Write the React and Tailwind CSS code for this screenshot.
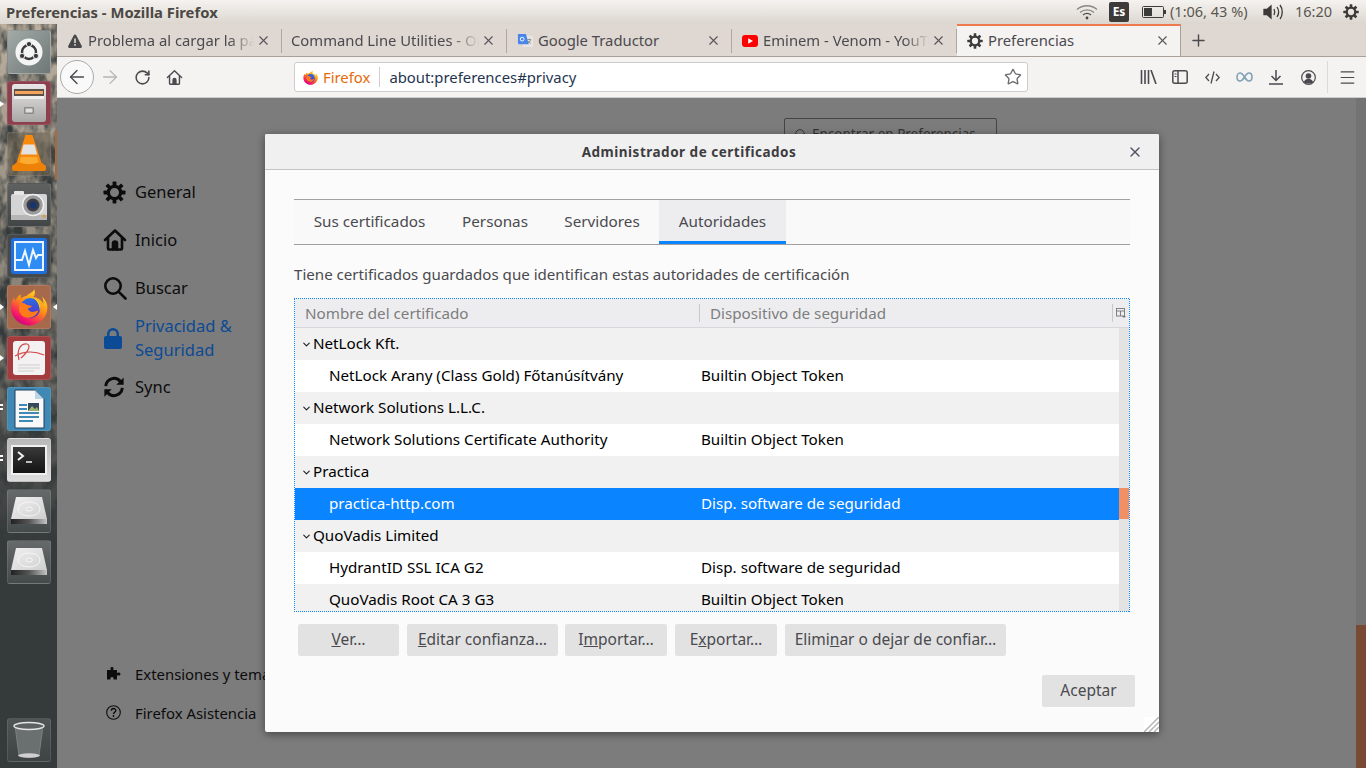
import React from "react";
import { ArrowLeft, ArrowRight, RotateCw, Star, X, Plus, Menu, ChevronDown, Search } from "lucide-react";

const FONT = "font-['Noto_Sans','DejaVu_Sans',sans-serif]";

function Gear({ size = 16, color = "#3c3c3c", hole = "transparent" }) {
  const teeth = [0, 45, 90, 135, 180, 225, 270, 315];
  return (
    <svg width={size} height={size} viewBox="0 0 24 24" fill="none">
      {teeth.map((a) => (
        <rect key={a} x="10" y="0.5" width="4" height="6" rx="0.8" fill={color} transform={`rotate(${a} 12 12)`} />
      ))}
      <circle cx="12" cy="12" r="6.4" fill={hole} stroke={color} strokeWidth="3.4" />
    </svg>
  );
}

function HomeIcon({ size = 16, color = "#3c3c3c", sw = 2 }) {
  return (
    <svg width={size} height={size} viewBox="0 0 24 24" fill="none" stroke={color} strokeWidth={sw} strokeLinejoin="round" strokeLinecap="round">
      <path d="M2 12 12 2.5 22 12" />
      <path d="M5 10v10.5a1 1 0 0 0 1 1h12a1 1 0 0 0 1-1V10" />
      <path d="M10 21.5v-6a2 2 0 0 1 4 0v6" fill={color} />
    </svg>
  );
}

function FirefoxLogo({ size = 16, id = "ff" }) {
  return (
    <svg width={size} height={size} viewBox="0 0 32 32">
      <defs>
        <linearGradient id={`${id}a`} x1="0.8" y1="0" x2="0.2" y2="1">
          <stop offset="0" stopColor="#ffe226" />
          <stop offset="0.45" stopColor="#ff8a16" />
          <stop offset="0.8" stopColor="#f5156c" />
          <stop offset="1" stopColor="#b5007f" />
        </linearGradient>
        <linearGradient id={`${id}b`} x1="0.5" y1="0" x2="0.5" y2="1">
          <stop offset="0" stopColor="#2a6fe0" />
          <stop offset="1" stopColor="#592acb" />
        </linearGradient>
      </defs>
      <path d="M20.5 1c1 3.2.3 5.2-1 6.6C24 8 27 11 28 13.500c.2-2-.2-4.500-1.200-6.500C30 10 31.500 13 31.500 16.500 31.500 25 24.500 31.500 16 31.500S.8 25 .8 16.500c0-3.500 1-6 2.700-8.700.2 1.200.6 2.200 1.300 3 .7-2.500 2.300-4.500 4.200-5.500-.2 1.300 0 2.400.6 3.300C11.500 6.500 14 7 14.500 6 16 4.500 19.500 3.500 20.500 1z" fill={`url(#${id}a)`} />
      <circle cx="17" cy="17" r="8.500" fill={`url(#${id}b)`} />
      <path d="M8 14c2-2 4-1.500 5-.5 1 1 4 1.500 5.500 1.500-.5 1.500-3 2-3.500 2.500.5 2 3 3 5 2.500 2-.5 3.500-1.500 4-1-1.500 4-5 6.500-9.500 6-5-.5-8-5-6.500-11z" fill="#ff7a18" />
      <path d="M20 8.500c3 1 5.500 4 5.500 8 0 1-.2 2-.5 2.500.2-4-2-8-5-10.500z" fill="#ffd21f" />
    </svg>
  );
}

/* launcher tiles */
function Tile({ bg, children }) {
  return (
    <div className={`relative w-[44px] h-[44px] rounded-[3px] flex items-center justify-center overflow-hidden border border-white/10 ${bg}`}>
      {children}
    </div>
  );
}

function UbuntuTile() {
  return (
    <Tile bg="bg-gradient-to-br from-[#a3aba9] to-[#6f7776]">
      <svg width="28" height="28" viewBox="0 0 30 30">
        <circle cx="15" cy="15" r="14.500" fill="#f4f4f4" />
        <circle cx="15" cy="15" r="7.500" fill="none" stroke="#3a3a3a" strokeWidth="2.600" />
        <circle cx="15" cy="6.500" r="2.800" fill="#3a3a3a" stroke="#f4f4f4" strokeWidth="1" />
        <circle cx="7.600" cy="19.200" r="2.800" fill="#3a3a3a" stroke="#f4f4f4" strokeWidth="1" />
        <circle cx="22.400" cy="19.200" r="2.800" fill="#3a3a3a" stroke="#f4f4f4" strokeWidth="1" />
      </svg>
    </Tile>
  );
}

function FilesTile() {
  return (
    <Tile bg="bg-[#8c3f4c]">
      <svg width="36" height="40" viewBox="0 0 36 40">
        <defs>
          <linearGradient id="cab" x1="0" y1="0" x2="0" y2="1">
            <stop offset="0" stopColor="#e8e8e8" />
            <stop offset="1" stopColor="#a9a7a5" />
          </linearGradient>
        </defs>
        <rect x="1" y="1" width="34" height="38" rx="3" fill="url(#cab)" />
        <rect x="3" y="6" width="30" height="9" fill="#5c5149" />
        <rect x="4" y="8" width="28" height="3" fill="#f2a45a" />
        <rect x="3" y="13" width="30" height="3" fill="#efefef" />
        <rect x="13" y="24" width="10" height="7" rx="1" fill="#8a8a8a" />
        <rect x="14.500" y="25.500" width="7" height="4" fill="#dedede" />
      </svg>
    </Tile>
  );
}

function VlcTile() {
  return (
    <Tile bg="bg-[#6b6150]/60">
      <svg width="36" height="40" viewBox="0 0 36 40">
        <path d="M14.500 1h7l10 31h-27z" fill="#f7890c" />
        <path d="M12.500 10.500h11l2.600 10H9.900z" fill="#e2e2e2" />
        <path d="M1 32l4-3h26l4 3v3a2 2 0 0 1-2 2H3a2 2 0 0 1-2-2z" fill="#ee8207" />
        <path d="M8.500 28c5 3 14 3 19 0l-1.500-5H10z" fill="#fbab2f" />
      </svg>
    </Tile>
  );
}

function CameraTile() {
  return (
    <Tile bg="bg-gradient-to-b from-[#5f6161] to-[#424646]">
      <svg width="38" height="32" viewBox="0 0 38 32">
        <rect x="1" y="5" width="36" height="26" rx="2" fill="#d4d4d4" />
        <rect x="1" y="26" width="36" height="5" fill="#b6b6b6" />
        <rect x="4" y="2" width="10" height="4" rx="1" fill="#e6e6e6" />
        <circle cx="23" cy="16" r="10.500" fill="#9a9a9a" stroke="#efefef" strokeWidth="1.500" />
        <circle cx="23" cy="16" r="6.500" fill="#3a3d43" />
        <circle cx="23" cy="16" r="3.500" fill="#18356f" />
        <circle cx="34" cy="27" r="1.500" fill="#e59a2e" />
      </svg>
    </Tile>
  );
}

function MonitorTile() {
  return (
    <Tile bg="bg-[#45494a]">
      <svg width="38" height="38" viewBox="0 0 38 38">
        <rect x="1" y="1" width="36" height="36" rx="3" fill="#1f6fe0" />
        <rect x="4" y="4" width="30" height="30" fill="#eaf4ff" />
        <rect x="6" y="6" width="26" height="26" fill="#2f8cf2" />
        <path d="M6 23h6l3-9 4 14 4-15 3 8 2-3h4" fill="none" stroke="#eef6ff" strokeWidth="2" />
      </svg>
    </Tile>
  );
}

function FirefoxTile() {
  return (
    <Tile bg="bg-[#a7694c]">
      <FirefoxLogo size={38} id="ffl" />
    </Tile>
  );
}

function PdfTile() {
  return (
    <Tile bg="bg-[#a23c3e]">
      <svg width="34" height="36" viewBox="0 0 34 36">
        <rect x="1" y="1" width="32" height="34" rx="3" fill="#f3f1f1" />
        <path d="M7 20C4 8 10 3 15 4c4 1 2 7-6 14M3 16c9-5 20-5 29-1" fill="none" stroke="#d24a4d" strokeWidth="1.200" />
        <path d="M6 25h22M6 28h22M6 31h16" stroke="#cfcfcf" strokeWidth="1" />
      </svg>
    </Tile>
  );
}

function WriterTile() {
  return (
    <Tile bg="bg-[#3f89b4]">
      <svg width="32" height="40" viewBox="0 0 32 40">
        <path d="M2 1h20l9 9v29H2z" fill="#f8f8f8" stroke="#1f3f5f" strokeWidth="1" />
        <path d="M22 1l9 9h-9z" fill="#b9d5e6" />
        <rect x="6" y="15" width="8" height="2" fill="#3f89b4" />
        <rect x="6" y="19" width="8" height="2" fill="#3f89b4" />
        <rect x="6" y="23" width="20" height="2" fill="#3f89b4" />
        <rect x="6" y="27" width="20" height="2" fill="#3f89b4" />
        <rect x="6" y="31" width="14" height="2" fill="#3f89b4" />
        <rect x="15" y="14" width="11" height="8" fill="#35495e" />
        <path d="M15 22l4-5 3 3 2-2 2 4z" fill="#9bb36a" />
      </svg>
    </Tile>
  );
}

function TerminalTile() {
  return (
    <Tile bg="bg-gradient-to-b from-[#b8b8b8] to-[#dcdcdc]">
      <div className="w-[36px] h-[30px] border-2 border-[#f0f0f0] bg-gradient-to-b from-[#3a3a3a] to-[#141414] flex items-start pl-[4px] pt-[4px]">
        <svg width="20" height="14" viewBox="0 0 20 14" fill="none" stroke="#f2f2f2">
          <path d="M1 1l5 4-5 4" strokeWidth="2" />
          <path d="M9 11h6" strokeWidth="1.500" />
        </svg>
      </div>
    </Tile>
  );
}

function DriveTile({ id = "drv" }) {
  return (
    <Tile bg="bg-gradient-to-b from-[#666a6a] to-[#454a4a]">
      <svg width="38" height="30" viewBox="0 0 38 30">
        <defs>
          <linearGradient id={`${id}t`} x1="0" y1="0" x2="1" y2="1">
            <stop offset="0" stopColor="#f0f0f0" />
            <stop offset="1" stopColor="#cfcfcf" />
          </linearGradient>
          <linearGradient id={id} x1="0" y1="0" x2="1" y2="0">
            <stop offset="0" stopColor="#222" />
            <stop offset="0.5" stopColor="#555" />
            <stop offset="1" stopColor="#c4c4c4" />
          </linearGradient>
        </defs>
        <path d="M6 1h26l5 22H1z" fill={`url(#${id}t)`} />
        <ellipse cx="19" cy="13" rx="11" ry="7" fill="none" stroke="#fafafa" strokeWidth="0.800" />
        <ellipse cx="19" cy="13" rx="3.500" ry="2" fill="none" stroke="#fafafa" strokeWidth="0.800" />
        <rect x="1" y="23" width="36" height="5" fill={`url(#${id})`} />
      </svg>
    </Tile>
  );
}

function TrashTile() {
  return (
    <Tile bg="bg-gradient-to-b from-[#4f5454] to-[#3e4343]">
      <svg width="32" height="38" viewBox="0 0 32 38">
        <path d="M2 5l4 30c3 2 17 2 20 0l4-30z" fill="#6a7070" stroke="#8e9494" strokeWidth="0.600" />
        <ellipse cx="16" cy="5" rx="15" ry="3.500" fill="#5c6161" stroke="#e6e6e6" strokeWidth="1.400" />
        <ellipse cx="16" cy="34.500" rx="11" ry="2.200" fill="#cfcfcf" />
      </svg>
    </Tile>
  );
}

function Launcher() {
  const tiles = [UbuntuTile, FilesTile, VlcTile, CameraTile, MonitorTile, FirefoxTile, PdfTile, WriterTile, TerminalTile];
  return (
    <div className="relative w-[57px] shrink-0 h-full flex flex-col items-center pt-[6px] pb-[6px] gap-[7px] bg-[#353a3b]">
      {/* wallpaper showing through the launcher */}
      <svg className="absolute left-0 top-0" width="57" height="520" viewBox="0 0 57 520">
        <defs>
          <filter id="bark" x="0" y="0" width="100%" height="100%">
            <feTurbulence type="fractalNoise" baseFrequency="0.09 0.05" numOctaves="3" seed="7" />
            <feColorMatrix values="0 0 0 0 0.5  0 0 0 0 0.43  0 0 0 0 0.34  2.6 0 0 0 -0.7" />
          </filter>
          <linearGradient id="fadeW" x1="0" y1="0" x2="0" y2="1">
            <stop offset="0" stopColor="#fff" />
            <stop offset="0.55" stopColor="#fff" stopOpacity="0.6" />
            <stop offset="1" stopColor="#fff" stopOpacity="0" />
          </linearGradient>
          <mask id="fadeM"><rect width="57" height="520" fill="url(#fadeW)" /></mask>
        </defs>
        <g mask="url(#fadeM)">
          <rect width="57" height="520" filter="url(#bark)" />
        </g>
        <rect x="55" y="106" width="2" height="50" fill="#a8693c" />
      </svg>
      {tiles.map((T, i) => (
        <T key={i} />
      ))}
      <DriveTile id="drv1" />
      <DriveTile id="drv2" />
      <div className="mt-auto">
        <TrashTile />
      </div>
      {/* running app pips */}
      <div className="absolute left-0 top-[77px] w-0 h-0 border-y-[3px] border-y-transparent border-l-[4px] border-l-white" />
      <div className="absolute left-0 top-[280px] w-0 h-0 border-y-[3px] border-y-transparent border-l-[4px] border-l-white" />
      <div className="absolute right-0 top-[280px] w-0 h-0 border-y-[3px] border-y-transparent border-r-[4px] border-r-white" />
      <div className="absolute left-0 top-[331px] w-0 h-0 border-y-[3px] border-y-transparent border-l-[4px] border-l-white" />
      <div className="absolute left-0 top-[380px] w-[3px] h-[2px] bg-white" />
      <div className="absolute left-0 top-[384px] w-[3px] h-[2px] bg-white" />
      <div className="absolute left-0 top-[431px] w-[3px] h-[2px] bg-white" />
      <div className="absolute left-0 top-[435px] w-[3px] h-[2px] bg-white" />
    </div>
  );
}

function TopBar() {
  return (
    <div className="h-[24px] shrink-0 flex items-center pl-[6px] pr-[7px] bg-gradient-to-b from-[#f5f3f0] to-[#dcd6cf] text-[#4c4843]">
      <span className="text-[14.800px] font-bold">Preferencias - Mozilla Firefox</span>
      <div className="ml-auto flex items-center text-[#5a5650] text-[14.500px]">
        <svg width="22" height="16" viewBox="0 0 22 16" fill="none" stroke="#8a8782" strokeWidth="1.300">
          <path d="M1 5.500C6.500.5 15.500.5 21 5.500" />
          <path d="M4 8.500c4-3.500 10-3.500 14 0" />
          <path d="M7 11c2.500-2 5.500-2 8 0" stroke="#4c4843" />
          <circle cx="11" cy="14" r="1.400" fill="#4c4843" stroke="none" />
        </svg>
        <div className="ml-[11px] w-[20px] h-[20px] rounded-[2px] bg-[#3c3b39] text-white text-[12px] font-bold flex items-center justify-center">Es</div>
        <svg className="ml-[13px]" width="24" height="12" viewBox="0 0 24 12" fill="none">
          <rect x="0.500" y="0.500" width="21" height="11" rx="1" stroke="#3c3b39" />
          <rect x="2" y="2" width="8" height="8" fill="#3c3b39" />
          <rect x="22" y="4" width="2" height="4" fill="#3c3b39" />
        </svg>
        <span className="ml-[4px] w-[78px] whitespace-nowrap">(1:06, 43 %)</span>
        <svg className="ml-[15px]" width="21" height="16" viewBox="0 0 21 16" fill="none" stroke="#3c3b39" strokeWidth="1.300">
          <path d="M1 5.500h3L8 2v12l-4-3.500H1z" fill="#3c3b39" />
          <path d="M11 5c1 2 1 4 0 6M14 3c2 3 2 7 0 10M17 1c3 4 3 10 0 14" />
        </svg>
        <span className="ml-[11px] w-[38px]">16:20</span>
        <span className="ml-[10px]"><Gear size={16} color="#3c3b39" /></span>
      </div>
    </div>
  );
}

function Warn() {
  return (
    <svg width="16" height="16" viewBox="0 0 16 16">
      <path d="M8 1.500c.5 0 1 .3 1.200.8l5.600 10.800c.4.800-.1 1.900-1.200 1.900H2.400c-1.100 0-1.600-1.100-1.200-1.900L6.800 2.300c.2-.5.700-.8 1.200-.8z" fill="#48484a" />
      <rect x="7.200" y="5.500" width="1.600" height="4.500" fill="#dfd7d1" />
      <rect x="7.200" y="11" width="1.600" height="1.700" fill="#dfd7d1" />
    </svg>
  );
}

function GTranslate() {
  return (
    <svg width="16" height="16" viewBox="0 0 17 17">
      <rect x="6" y="3" width="11" height="12" rx="1" fill="#e8e6e4" />
      <path d="M1 1h8.500l3 11H2.500A1.500 1.500 0 0 1 1 10.500z" fill="#4a86e8" />
      <circle cx="5.500" cy="6.500" r="2" fill="none" stroke="#fff" strokeWidth="1" />
      <path d="M11 7h4M13 6v1M14.500 7c-.5 2-1.800 3.500-3.500 4M11.800 8.500c.5 1 1.500 2 3 2.500" stroke="#6f6f6f" strokeWidth="0.700" fill="none" />
    </svg>
  );
}

function YouTube() {
  return (
    <svg width="16" height="12" viewBox="0 0 16 12">
      <rect width="16" height="12" rx="3" fill="#ff0000" />
      <path d="M6.200 3.300 11 6l-4.800 2.700z" fill="#fff" />
    </svg>
  );
}

function Tab({ icon, label, active, sep = true, fade = true }) {
  return (
    <div className={`h-full flex items-center shrink-0 relative ${active ? "w-[224px] bg-[#f5f3f2] border-t-2 border-t-[#f07a50] border-r border-r-[#a89f99] pl-[9px] pr-[9px] pb-[1px]" : "w-[225px] pl-[9px] pr-[10px] pt-[1px]"}`}>
      {icon && <span className="w-[16px] h-[16px] ml-[1px] mr-[5px] flex items-center justify-center shrink-0">{icon}</span>}
      <span className={`flex-1 min-w-0 overflow-hidden whitespace-nowrap text-[14.800px] text-[#4a4a4f] ${fade ? "[mask-image:linear-gradient(to_right,black_85%,transparent)]" : ""}`}>{label}</span>
      <X size={15} strokeWidth={1.800} color="#55555a" className="ml-[2px] mr-[1px] shrink-0" />
      {sep && <span className="w-px h-[24px] bg-[#aea69f] absolute right-0" />}
    </div>
  );
}

function TabBar() {
  return (
    <div className="h-[33px] shrink-0 flex bg-[#dfd7d1] border-b border-b-[#a89f99]">
      <Tab icon={<Warn />} label="Problema al cargar la página" />
      <Tab label="Command Line Utilities - OpenSSL" />
      <Tab icon={<GTranslate />} label="Google Traductor" fade={false} />
      <Tab icon={<YouTube />} label="Eminem - Venom - YouTube" />
      <Tab icon={<Gear size={16} color="#3c3c3c" />} label="Preferencias" active sep={false} fade={false} />
      <div className="ml-[8px] flex items-center">
        <Plus size={19} strokeWidth={1.800} color="#4a4a4f" />
      </div>
    </div>
  );
}

function ToolIcon({ children, w = 32 }) {
  return <div className="h-full flex items-center justify-center shrink-0" style={{ width: w }}>{children}</div>;
}

function Toolbar() {
  return (
    <div className="h-[41px] shrink-0 flex items-center bg-[#f5f3f2] border-b border-b-[#cfcdcb] pl-[3px]">
      <div className="w-[34px] h-[34px] rounded-full border border-[#aaa] bg-[#f9f9f9] flex items-center justify-center shrink-0">
        <ArrowLeft size={22} strokeWidth={1.500} color="#4a4a4f" />
      </div>
      <ToolIcon w={32}><ArrowRight size={22} strokeWidth={1.400} color="#b5b5b5" /></ToolIcon>
      <ToolIcon w={32}><RotateCw size={17} strokeWidth={2.200} color="#4a4a4f" /></ToolIcon>
      <ToolIcon w={32}><HomeIcon size={17} color="#4a4a4f" /></ToolIcon>
      <div className="ml-[104px] w-[734px] h-[30px] bg-white border border-[#cccccc] rounded-[3px] flex items-center pl-[8px] pr-[5px] text-[14.850px]">
        <FirefoxLogo size={15} id="ffu" />
        <span className="ml-[5px] text-[#e66a0a]">Firefox</span>
        <span className="ml-[9px] w-px h-[20px] bg-[#cfcfcf]" />
        <span className="ml-[9px] text-[#1f3550]">about:preferences#privacy</span>
        <Star size={18} strokeWidth={1.800} color="#6a6a6f" className="ml-auto" />
      </div>
      <div className="ml-[104px] flex h-full items-center">
        <ToolIcon>
          <svg width="17" height="14" viewBox="0 0 17 14" stroke="#4a4a4f" strokeWidth="1.600" fill="none">
            <path d="M1.500 0v14M5 0v14M8.500 0v14M11 0l5 14" />
          </svg>
        </ToolIcon>
        <ToolIcon>
          <svg width="16" height="14" viewBox="0 0 16 14" fill="none" stroke="#4a4a4f" strokeWidth="1.500">
            <rect x="0.800" y="0.800" width="14.400" height="12.400" rx="2" />
            <path d="M6 1v12" />
            <path d="M2.500 4h2M2.500 6.500h2" strokeWidth="1" />
          </svg>
        </ToolIcon>
        <ToolIcon>
          <svg width="15" height="13" viewBox="0 0 15 13" fill="none" stroke="#4a4a4f" strokeWidth="1.300">
            <path d="M4 3 .8 6.500 4 10M11 3l3.200 3.500L11 10M9 .5 6 12.500" />
          </svg>
        </ToolIcon>
        <ToolIcon>
          <svg width="17" height="10" viewBox="0 0 17 10" fill="none" stroke="#7fa0b2" strokeWidth="1.600">
            <path d="M8.500 5C7 2.500 5.800 1 4 1 2.200 1 1 2.800 1 5s1.200 4 3 4c1.800 0 3-1.500 4.500-4zm0 0C10 2.500 11.200 1 13 1c1.800 0 3 1.800 3 4s-1.200 4-3 4c-1.800 0-3-1.500-4.500-4z" />
          </svg>
        </ToolIcon>
        <ToolIcon>
          <svg width="14" height="15" viewBox="0 0 14 15" fill="none" stroke="#4a4a4f" strokeWidth="1.500">
            <path d="M7 0v10M2.500 6 7 10.500 11.500 6M0 14h14" />
          </svg>
        </ToolIcon>
        <ToolIcon>
          <svg width="15" height="15" viewBox="0 0 15 15">
            <circle cx="7.500" cy="7.500" r="6.800" fill="none" stroke="#4a4a4f" strokeWidth="1.200" />
            <circle cx="7.500" cy="6" r="2.800" fill="#4a4a4f" />
            <path d="M2.800 12c1-2.500 3-3 4.700-3s3.700.5 4.700 3c-2.500 2-7 2-9.400 0z" fill="#4a4a4f" />
          </svg>
        </ToolIcon>
        <span className="ml-[3px] w-px h-[32px] bg-[#dcdad8]" />
        <div className="ml-[10px]"><Menu size={19} strokeWidth={1.500} color="#4a4a4f" /></div>
      </div>
    </div>
  );
}

function SideItem({ icon, children, blue, small }) {
  return (
    <div className={`flex items-center h-full leading-[24px] ${small ? "text-[14.900px]" : "text-[16.500px]"} ${blue ? "text-[#0b4a94]" : "text-[#0c0c0d]"}`}>
      <span className="w-[32px] flex items-center justify-start shrink-0">{icon}</span>
      <span className="whitespace-nowrap">{children}</span>
    </div>
  );
}

function Sidebar() {
  return (
    <div className="w-[250px] shrink-0 flex flex-col pl-[46px] pt-[70px] pb-[36px]">
      <div className="h-[48px]"><SideItem icon={<Gear size={23} color="#0c0c0d" />}>General</SideItem></div>
      <div className="h-[48px]"><SideItem icon={<HomeIcon size={24} color="#0c0c0d" sw={2.600} />}>Inicio</SideItem></div>
      <div className="h-[48px]">
        <SideItem icon={
          <svg width="24" height="24" viewBox="0 0 24 24" fill="none" stroke="#0c0c0d" strokeWidth="2.600" strokeLinecap="round">
            <circle cx="10" cy="10" r="7.700" />
            <path d="M15.800 15.800 22.500 22.500" />
          </svg>
        }>Buscar</SideItem>
      </div>
      <div className="h-[52px]">
        <SideItem blue icon={
          <svg width="20" height="23" viewBox="0 0 20 23" fill="#0b4a94">
            <path d="M4 10V7a6 6 0 0 1 12 0v3h-2.500V7a3.500 3.500 0 0 0-7 0v3z" />
            <rect x="1" y="9" width="18" height="13" rx="2" />
          </svg>
        }>
          Privacidad &<br />Seguridad
        </SideItem>
      </div>
      <div className="h-[46px]">
        <SideItem icon={
          <svg width="22" height="22" viewBox="0 0 24 24" fill="none" stroke="#0c0c0d" strokeWidth="3.200">
            <path d="M3 11a9 9 0 0 1 16-5l2 2" />
            <path d="M21 13a9 9 0 0 1-16 5l-2-2" />
            <path d="M22.500 1.500v8h-8z" fill="#0c0c0d" stroke="none" />
            <path d="M1.500 22.500v-8h8z" fill="#0c0c0d" stroke="none" />
          </svg>
        }>Sync</SideItem>
      </div>
      <div className="mt-auto">
        <div className="h-[39px]">
          <SideItem small icon={
            <svg className="ml-[3px]" width="15" height="15" viewBox="0 0 15 15" fill="#0c0c0d">
              <path d="M1 4h4c-1-1-.8-3 1-3s2 2 1 3h4v3c1-1 3.500-.8 3.500 1s-2.500 2-3.500 1v4.500H7.500c.5-1.500-.5-2.500-1.500-2.500S4 12 4.500 13.500H1z" />
            </svg>
          }>Extensiones y temas</SideItem>
        </div>
        <div className="h-[39px]">
          <SideItem small icon={
            <svg className="ml-[3px]" width="15" height="15" viewBox="0 0 15 15" fill="none" stroke="#0c0c0d" strokeWidth="1.100">
              <circle cx="7.500" cy="7.500" r="6.800" />
              <path d="M5.300 5.800c0-3 4.500-3 4.500-.3 0 1.800-2.300 1.600-2.300 3.500" strokeWidth="1.400" />
              <circle cx="7.500" cy="11" r="0.900" fill="#0c0c0d" stroke="none" />
            </svg>
          }>Firefox Asistencia</SideItem>
        </div>
      </div>
    </div>
  );
}

function GroupRow({ label }) {
  return (
    <div className="h-[32px] shrink-0 flex items-center bg-[#f1f1f1] text-black pl-[6px] pb-[2px]">
      <ChevronDown size={11} strokeWidth={2.500} color="#222" className="shrink-0 mt-[2px]" />
      <span className="ml-[1px]">{label}</span>
    </div>
  );
}

function CertRow({ name, device, selected, grey }) {
  const bg = selected ? "bg-[#0a84ff] text-white" : grey ? "bg-[#f1f1f1] text-black" : "bg-white text-black";
  return (
    <div className={`h-[32px] shrink-0 flex items-center pb-[2px] ${bg}`}>
      <span className="w-[406px] shrink-0 pl-[34px] whitespace-nowrap">{name}</span>
      <span className="whitespace-nowrap">{device}</span>
    </div>
  );
}

function CertTree() {
  return (
    <div className="h-[314px] p-px flex flex-col text-[15.200px] [background:repeating-linear-gradient(90deg,#0a84ff_0_1px,transparent_1px_2px)_top/100%_1px_no-repeat,repeating-linear-gradient(90deg,#0a84ff_0_1px,transparent_1px_2px)_bottom/100%_1px_no-repeat,repeating-linear-gradient(0deg,#0a84ff_0_1px,transparent_1px_2px)_left/1px_100%_no-repeat,repeating-linear-gradient(0deg,#0a84ff_0_1px,transparent_1px_2px)_right/1px_100%_no-repeat]">
      <div className="h-[29px] shrink-0 flex items-center bg-[#ededf0] border-b border-b-[#d7d7db] text-[#7d7d7d]">
        <span className="w-[404px] pl-[10px] shrink-0 whitespace-nowrap">Nombre del certificado</span>
        <span className="w-px h-[18px] bg-[#c8c8c8] shrink-0" />
        <span className="ml-[10px] whitespace-nowrap">Dispositivo de seguridad</span>
        <span className="ml-auto w-px h-[18px] bg-[#c8c8c8]" />
        <svg className="mx-[3px]" width="10" height="10" viewBox="0 0 10 10" fill="none" stroke="#777" strokeWidth="0.900">
          <rect x="0.500" y="0.500" width="8" height="7.500" />
          <path d="M0.500 3h8M4.500 3v5" />
          <path d="M6 8h4L8 10z" fill="#777" stroke="none" />
        </svg>
      </div>
      <div className="flex flex-1 min-h-0 overflow-hidden">
        <div className="flex-1 min-w-0 flex flex-col">
          <GroupRow label="NetLock Kft." />
          <CertRow name="NetLock Arany (Class Gold) Főtanúsítvány" device="Builtin Object Token" />
          <GroupRow label="Network Solutions L.L.C." />
          <CertRow name="Network Solutions Certificate Authority" device="Builtin Object Token" />
          <GroupRow label="Practica" />
          <CertRow name="practica-http.com" device="Disp. software de seguridad" selected />
          <GroupRow label="QuoVadis Limited" />
          <CertRow name="HydrantID SSL ICA G2" device="Disp. software de seguridad" />
          <CertRow name="QuoVadis Root CA 3 G3" device="Builtin Object Token" grey />
        </div>
        <div className="w-[10px] shrink-0 bg-[#e3e3e3] pt-[160px]">
          <div className="h-[31px] bg-[#f19065]" />
        </div>
      </div>
    </div>
  );
}

function Btn({ w, before, u, after }) {
  return (
    <div className="h-[32px] rounded-[2px] bg-[#e2e2e2] text-[#4a4a4f] text-[15.500px] flex items-center justify-center shrink-0 whitespace-nowrap" style={{ width: w }}>
      <span>{before}<span className="underline">{u}</span>{after}</span>
    </div>
  );
}

function Dialog() {
  const tabs = [
    { t: "Sus certificados", w: 151 },
    { t: "Personas", w: 100 },
    { t: "Servidores", w: 114 },
  ];
  return (
    <div className="absolute left-[208px] top-[36px] w-[894px] h-[598px] bg-[#fbfbfb] rounded-[2px] shadow-[0_2px_8px_rgba(0,0,0,0.45)] flex flex-col">
      <div className="h-[36px] shrink-0 bg-[#f0f0f0] border-b border-b-[#c4c4c4] rounded-t-[2px] flex items-center relative">
        <span className="flex-1 text-center text-[13.500px] font-bold tracking-[0.5px] text-[#3d3d40] pr-[46px] pt-[1px]">Administrador de certificados</span>
        <X size={16} strokeWidth={2} color="#4f5560" className="absolute right-[16px] top-[10px]" />
      </div>
      <div className="flex-1 min-h-0 flex flex-col px-[29px] pt-[29px] relative">
        <div className="h-[46px] shrink-0 flex border-y border-y-[#a0a0a0] bg-[#f9f9f9] text-[15.250px] text-[#4a4a4f]">
          {tabs.map((t) => (
            <div key={t.t} className="h-full flex items-center justify-center whitespace-nowrap pb-[1px]" style={{ width: t.w }}>{t.t}</div>
          ))}
          <div className="w-[127px] h-full bg-[#ededf0] border-b-[3px] border-b-[#0a84ff] flex items-center justify-center pt-[2px]">Autoridades</div>
        </div>
        <div className="h-[53px] shrink-0 flex items-center pt-[6px] text-[15.100px] text-[#4a4a4f] whitespace-nowrap">
          Tiene certificados guardados que identifican estas autoridades de certificación
        </div>
        <CertTree />
        <div className="mt-[12px] ml-[4px] flex">
          <Btn w={101} u="V" after="er…" />
          <div className="w-[8px]" />
          <Btn w={151} u="E" after="ditar confianza…" />
          <div className="w-[7px]" />
          <Btn w={102} before="I" u="m" after="portar…" />
          <div className="w-[8px]" />
          <Btn w={102} before="E" u="x" after="portar…" />
          <div className="w-[8px]" />
          <Btn w={221} before="Elimi" u="n" after="ar o dejar de confiar…" />
        </div>
        <div className="mt-[19px] mr-[-5px] flex justify-end">
          <Btn w={93} before="Aceptar" />
        </div>
        <svg className="absolute right-0 bottom-0" width="15" height="15" viewBox="0 0 15 15">
          <rect width="15" height="15" fill="#ffffff" />
          <path d="M0 15 15 0M5 15 15 5M10 15l5-5" stroke="#b5b5b5" strokeWidth="1.500" />
        </svg>
      </div>
    </div>
  );
}

function Content() {
  return (
    <div className="flex-1 min-h-0 flex bg-[#7c7c7c] relative overflow-hidden">
      <Sidebar />
      <div className="flex-1 min-w-0 pt-[20px] pl-[477px]">
        <div className="w-[213px] h-[32px] border border-[#454545] rounded-[2px] flex items-center pl-[9px] text-[13.500px] text-[#333]">
          <Search size={13} strokeWidth={1.800} color="#333" />
          <span className="ml-[5px] whitespace-nowrap">Encontrar en Preferencias</span>
        </div>
      </div>
      <div className="w-[10px] shrink-0 flex flex-col">
        <div className="flex-1 bg-[#737373]" />
        <div className="h-[143px] bg-[#784a35]" />
      </div>
      <Dialog />
    </div>
  );
}

export default function App() {
  return (
    <div className={`w-[1366px] h-[768px] overflow-hidden flex flex-col ${FONT}`}>
      <TopBar />
      <div className="flex-1 min-h-0 flex">
        <Launcher />
        <div className="flex-1 min-w-0 flex flex-col">
          <TabBar />
          <Toolbar />
          <Content />
        </div>
      </div>
    </div>
  );
}
